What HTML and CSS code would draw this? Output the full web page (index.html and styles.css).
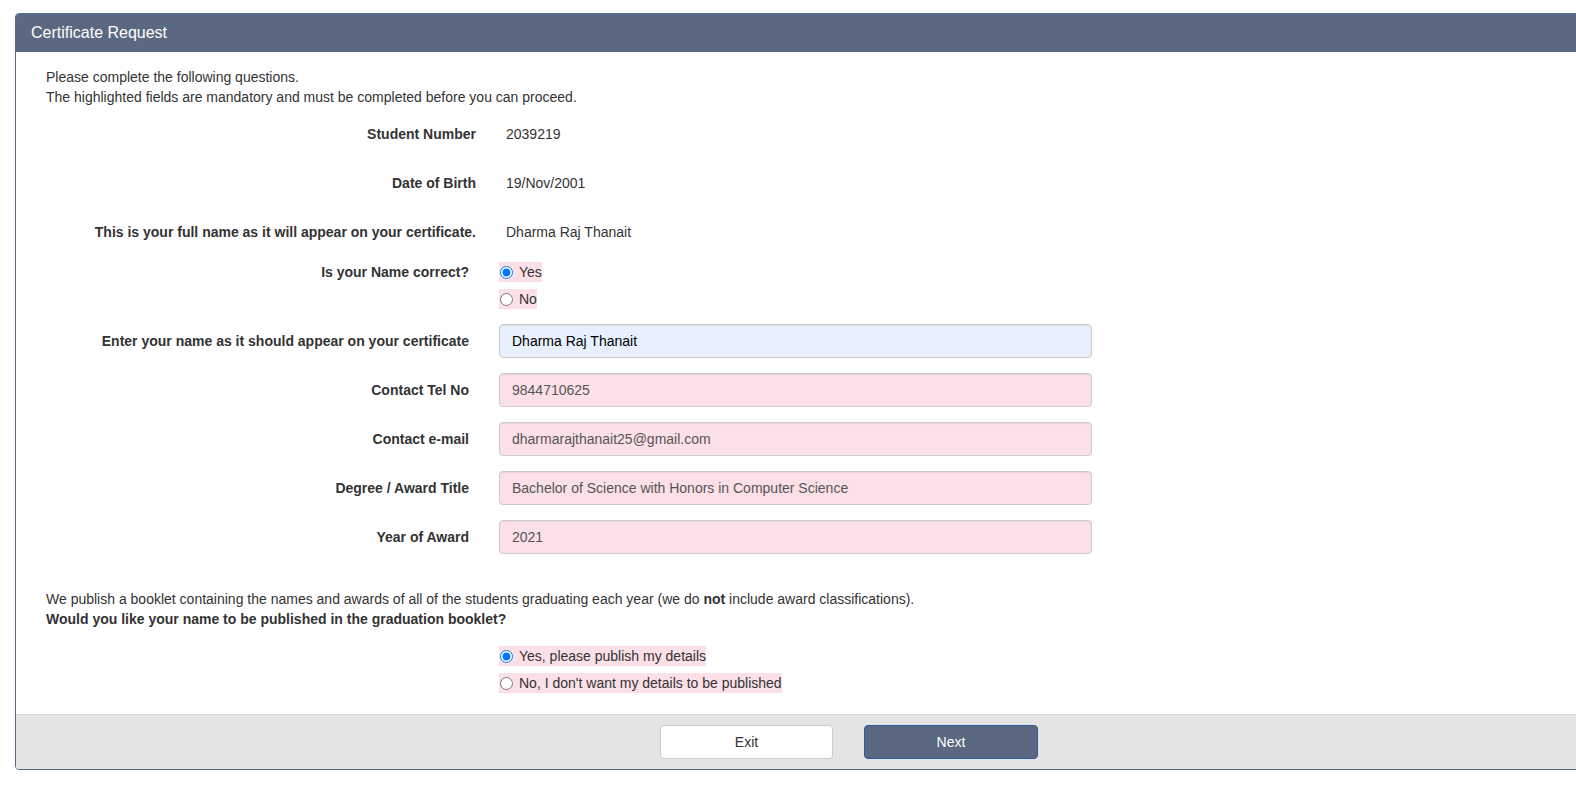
FILE: index.html
```html
<!DOCTYPE html>
<html lang="en">
<head>
<meta charset="utf-8">
<title>Certificate Request</title>
<link rel="stylesheet" href="styles.css">
</head>
<body>
<div class="panel">
  <div class="panel-head">Certificate Request</div>
  <div class="panel-body">
    <p class="intro">Please complete the following questions.<br>The highlighted fields are mandatory and must be completed before you can proceed.</p>
    <div class="form">
      <div class="row row-static">
        <div class="lbl">Student Number</div>
        <div class="val">2039219</div>
      </div>
      <div class="row row-static">
        <div class="lbl">Date of Birth</div>
        <div class="val">19/Nov/2001</div>
      </div>
      <div class="row row-static">
        <div class="lbl">This is your full name as it will appear on your certificate.</div>
        <div class="val">Dharma Raj Thanait</div>
      </div>
      <div class="row row-radio">
        <div class="lbl">Is your Name correct?</div>
        <div class="opts">
          <label class="opt"><input type="radio" name="namecorrect" checked><span>Yes</span></label>
          <label class="opt"><input type="radio" name="namecorrect"><span>No</span></label>
        </div>
      </div>
      <div class="row">
        <label class="lbl" for="f-name">Enter your name as it should appear on your certificate</label>
        <input id="f-name" class="ctl ctl-filled" type="text" value="Dharma Raj Thanait">
      </div>
      <div class="row">
        <label class="lbl" for="f-tel">Contact Tel No</label>
        <input id="f-tel" class="ctl" type="text" value="9844710625">
      </div>
      <div class="row">
        <label class="lbl" for="f-mail">Contact e-mail</label>
        <input id="f-mail" class="ctl" type="text" value="dharmarajthanait25@gmail.com">
      </div>
      <div class="row">
        <label class="lbl" for="f-deg">Degree / Award Title</label>
        <input id="f-deg" class="ctl" type="text" value="Bachelor of Science with Honors in Computer Science">
      </div>
      <div class="row">
        <label class="lbl" for="f-year">Year of Award</label>
        <input id="f-year" class="ctl" type="text" value="2021">
      </div>
    </div>
    <p class="booklet">We publish a booklet containing the names and awards of all of the students graduating each year (we do <b>not</b> include award classifications).<br><b>Would you like your name to be published in the graduation booklet?</b></p>
    <div class="row row-publish">
      <div class="lbl"></div>
      <div class="opts">
        <label class="opt"><input type="radio" name="publish" checked><span>Yes, please publish my details</span></label>
        <label class="opt"><input type="radio" name="publish"><span>No, I don't want my details to be published</span></label>
      </div>
    </div>
  </div>
  <div class="panel-foot">
    <button class="btn btn-default" type="button">Exit</button>
    <button class="btn btn-primary" type="button">Next</button>
  </div>
</div>
</body>
</html>
```

FILE: styles.css
```css
html, body {
  margin: 0;
  padding: 0;
  overflow: hidden;
  background: #ffffff;
}

body {
  font-family: "Liberation Sans", Arial, sans-serif;
  font-size: 14px;
  line-height: 20px;
  color: #333333;
}

.panel {
  margin: 13px 0 0 15px;
  width: 1668px;
  border: 1px solid #5b6882;
  border-radius: 4px;
  overflow: hidden;
  box-sizing: border-box;
}

.panel-head {
  height: 38px;
  background: #5b6882;
  color: #ffffff;
  font-size: 16px;
  line-height: 38px;
  padding: 0 15px;
}

.panel-body {
  padding: 15px 30px 21px 30px;
}

.intro {
  margin: 0 0 10px 0;
}

.form {
  display: flex;
  flex-direction: column;
  gap: 15px;
}

.row {
  display: flex;
  align-items: center;
  gap: 30px;
}

.lbl {
  width: 423px;
  flex: none;
  text-align: right;
  font-weight: bold;
  color: #333333;
}

.row-static {
  height: 34px;
  margin-left: 7px;
}

.val {
  color: #333333;
}

.row-radio {
  align-items: flex-start;
  margin-top: -2px;
}

.opts {
  display: flex;
  flex-direction: column;
  align-items: flex-start;
  gap: 7px;
}

.opt {
  display: flex;
  align-items: center;
  gap: 6px;
  height: 20px;
  padding-left: 1px;
  background: #fce0e8;
  cursor: pointer;
}

.opt input {
  margin: 0;
  width: 13px;
  height: 13px;
}

.ctl {
  width: 593px;
  height: 34px;
  box-sizing: border-box;
  padding: 6px 12px;
  border: 1px solid #cccccc;
  border-radius: 4px;
  background: #fce0e8;
  color: #555555;
  font-family: "Liberation Sans", Arial, sans-serif;
  font-size: 14px;
  box-shadow: inset 0 1px 1px rgba(0, 0, 0, 0.075);
  outline: none;
}

.ctl-filled {
  background: #e8f0fe;
  color: #000000;
}

.booklet {
  margin: 35px 0 0 0;
}

.row-publish {
  margin-top: 17px;
  align-items: flex-start;
}

.panel-foot {
  display: flex;
  justify-content: center;
  gap: 31px;
  padding: 10px 0;
  background: #e4e4e4;
  border-top: 1px solid #d8d8d8;
}

.btn {
  width: 173px;
  height: 34px;
  border-radius: 4px;
  font-family: "Liberation Sans", Arial, sans-serif;
  font-size: 14px;
  cursor: pointer;
}

.btn-default {
  background: #ffffff;
  border: 1px solid #cccccc;
  color: #333333;
}

.btn-primary {
  width: 174px;
  background: #5b6882;
  border: 1px solid #2e5b9a;
  color: #ffffff;
}
```
